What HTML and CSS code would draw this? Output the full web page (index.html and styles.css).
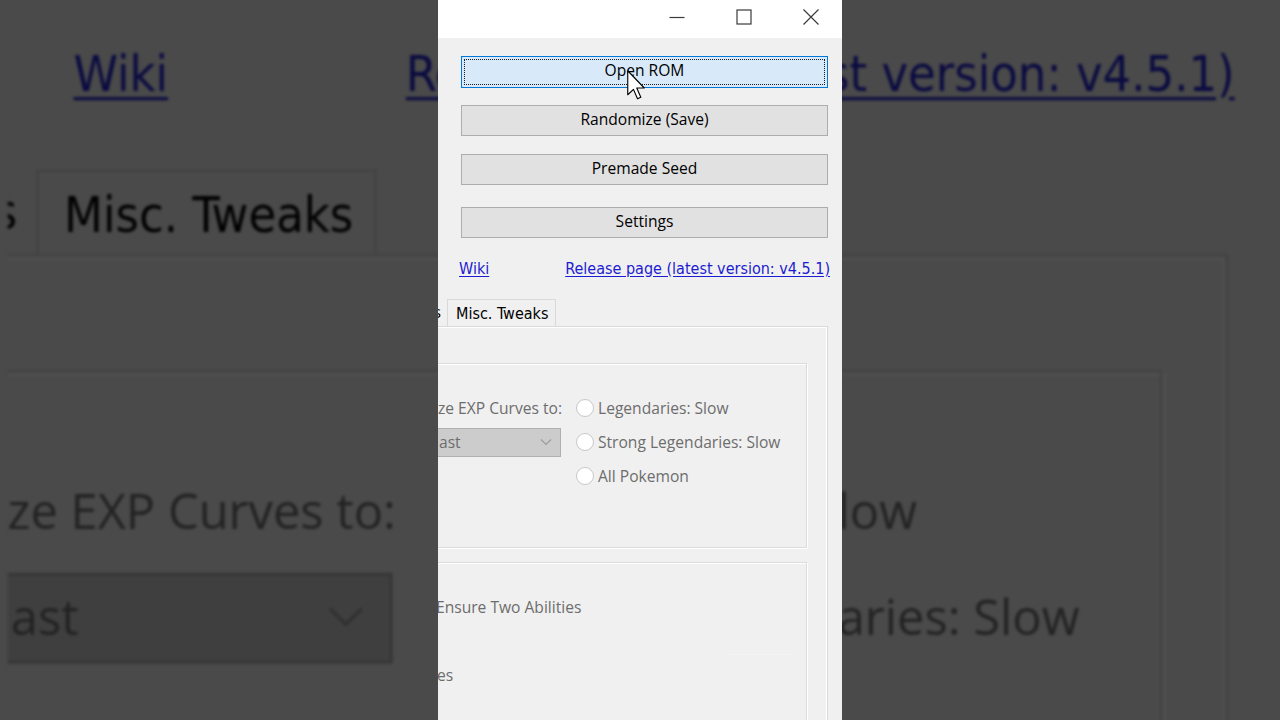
FILE: index.html
```html
<!DOCTYPE html>
<html>
<head>
<meta charset="utf-8">
<link rel="stylesheet" href="styles.css">
</head>
<body>
<div class="stage">
  <div class="backdrop">
    <div class="win">
      <div class="titlebar">
        <div class="ctl"><svg width="16" height="16" viewBox="0 0 16 16"><path d="M0.5 8.5H15.5" stroke="#3a3a3a" stroke-width="1.2" fill="none"/></svg></div>
        <div class="ctl"><svg width="16" height="16" viewBox="0 0 16 16"><rect x="1" y="1" width="14" height="14" stroke="#3a3a3a" stroke-width="1.2" fill="none"/></svg></div>
        <div class="ctl"><svg width="16" height="16" viewBox="0 0 16 16"><path d="M0.5 0.5L15.5 15.5M15.5 0.5L0.5 15.5" stroke="#3a3a3a" stroke-width="1.2" fill="none"/></svg></div>
      </div>
      <div class="main">
        <div class="btn btn-focus"><span class="focus-ring">Open ROM</span></div>
        <div class="btn btn-2">Randomize (Save)</div>
        <div class="btn btn-3">Premade Seed</div>
        <div class="btn btn-4">Settings</div>
        <div class="links">
          <a class="link">Wiki</a>
          <a class="link">Release page (latest version: v4.5.1)</a>
        </div>
      </div>
      <div class="tabs">
        <div class="tab tab-prev">s</div>
        <div class="tab">Misc. Tweaks</div>
      </div>
      <div class="panel">
        <div class="group group-1">
          <div class="cell-l">ze EXP Curves to:</div>
          <div class="cell-r"><span class="radio"></span>Legendaries: Slow</div>
          <div class="cell-l"><div class="combo"><span class="combo-text">ast</span><svg class="chev" width="12" height="8" viewBox="0 0 12 8"><path d="M1 1.5L6 6.5L11 1.5" stroke="#9a9a9a" stroke-width="1.1" fill="none"/></svg></div></div>
          <div class="cell-r"><span class="radio"></span>Strong Legendaries: Slow</div>
          <div class="cell-l"></div>
          <div class="cell-r"><span class="radio"></span>All Pokemon</div>
        </div>
        <div class="group group-2">
          <div class="row2 row2-a">Ensure Two Abilities</div>
          <div class="row2 row2-b">es</div>
          <div class="faint"></div>
        </div>
      </div>
    </div>
  </div>

  <div class="win front">
    <div class="titlebar">
      <div class="ctl"><svg width="16" height="16" viewBox="0 0 16 16"><path d="M0.5 8.5H15.5" stroke="#3a3a3a" stroke-width="1.2" fill="none"/></svg></div>
      <div class="ctl"><svg width="16" height="16" viewBox="0 0 16 16"><rect x="1" y="1" width="14" height="14" stroke="#3a3a3a" stroke-width="1.2" fill="none"/></svg></div>
      <div class="ctl"><svg width="16" height="16" viewBox="0 0 16 16"><path d="M0.5 0.5L15.5 15.5M15.5 0.5L0.5 15.5" stroke="#3a3a3a" stroke-width="1.2" fill="none"/></svg></div>
    </div>
    <div class="main">
      <div class="btn btn-focus"><span class="focus-ring">Open ROM</span></div>
      <div class="btn btn-2">Randomize (Save)</div>
      <div class="btn btn-3">Premade Seed</div>
      <div class="btn btn-4">Settings</div>
      <div class="links">
        <a class="link">Wiki</a>
        <a class="link">Release page (latest version: v4.5.1)</a>
      </div>
    </div>
    <div class="tabs">
      <div class="tab tab-prev">s</div>
      <div class="tab">Misc. Tweaks</div>
    </div>
    <div class="panel">
      <div class="group group-1">
        <div class="cell-l">ze EXP Curves to:</div>
        <div class="cell-r"><span class="radio"></span>Legendaries: Slow</div>
        <div class="cell-l"><div class="combo"><span class="combo-text">ast</span><svg class="chev" width="12" height="8" viewBox="0 0 12 8"><path d="M1 1.5L6 6.5L11 1.5" stroke="#9a9a9a" stroke-width="1.1" fill="none"/></svg></div></div>
        <div class="cell-r"><span class="radio"></span>Strong Legendaries: Slow</div>
        <div class="cell-l"></div>
        <div class="cell-r"><span class="radio"></span>All Pokemon</div>
      </div>
      <div class="group group-2">
        <div class="row2 row2-a">Ensure Two Abilities</div>
        <div class="row2 row2-b">es</div>
        <div class="faint"></div>
      </div>
    </div>
    <svg class="cursor" width="18" height="30" viewBox="0 0 12 20"><path d="M0.5 0.5L0.5 16.5L4.3 12.9L7 19.2L9.2 18.2L6.5 12L11.5 12Z" fill="#fff" stroke="#000" stroke-width="0.75" stroke-linejoin="round"/></svg>
  </div>
</div>
</body>
</html>
```

FILE: styles.css
```css
* { box-sizing: border-box; }
html, body { margin: 0; padding: 0; }
body {
  width: 1280px;
  height: 720px;
  overflow: hidden;
  background: #4a4a4a;
}
.stage {
  position: relative;
  width: 1280px;
  height: 720px;
  display: flex;
  justify-content: center;
  overflow: hidden;
}
.backdrop {
  position: absolute;
  left: 438px;
  top: 0;
  width: 404px;
  height: 720px;
  transform: scale(3.13);
  transform-origin: 202px 360px;
  filter: brightness(0.31) blur(0.45px);
}
.win {
  position: relative;
  width: 404px;
  height: 720px;
  background: #f0f0f0;
  overflow: hidden;
  font-family: "Open Sans", "Noto Sans", sans-serif;
  font-size: 15.6px;
  color: #000;
}
.titlebar {
  height: 38px;
  background: #fff;
  display: flex;
  justify-content: flex-end;
  margin-right: -2px;
}
.ctl {
  width: 67px;
  height: 33px;
  display: flex;
  align-items: center;
  justify-content: center;
}
.main {
  padding: 18px 14px 0 23px;
  display: flex;
  flex-direction: column;
}
.btn {
  height: 31px;
  background: #e1e1e1;
  border: 1px solid #adadad;
  display: flex;
  align-items: center;
  justify-content: center;
  line-height: 1;
  padding-bottom: 2px;
}
.btn-focus {
  height: 32px;
  background: #d8e9f9;
  border: 1px solid #0078d7;
  padding: 2px;
}
.focus-ring {
  width: 100%;
  height: 100%;
  border: 1px dotted #1a1a1a;
  display: flex;
  align-items: center;
  justify-content: center;
  padding-bottom: 2px;
}
.btn-2 { margin-top: 17px; }
.btn-3 { margin-top: 18px; }
.btn-4 { margin-top: 22px; }
.links {
  margin-top: 20px;
  margin-left: -2px;
  height: 20px;
  display: flex;
  justify-content: space-between;
  align-items: center;
  margin-right: -2px;
}
.link {
  font-family: "DejaVu Sans", sans-serif;
  font-stretch: condensed;
  font-size: 16px;
  color: #1c1cd0;
  text-decoration: underline;
  text-underline-offset: 2px;
}
.tabs {
  margin-top: 21px;
  height: 27px;
  display: flex;
  font-family: "DejaVu Sans", sans-serif;
  font-stretch: condensed;
  font-size: 16px;
}
.tab {
  height: 27px;
  border: 1px solid #d9d9d9;
  border-bottom: none;
  padding: 0 7px 0 8px;
  display: flex;
  align-items: center;
  white-space: nowrap;
}
.tab-prev {
  width: 10px;
  border-left: none;
  border-top: none;
  padding: 0 6px 0 0;
  justify-content: flex-end;
}
.tab-prev + .tab { margin-left: -1px; }
.panel {
  margin-left: -20px;
  width: 410px;
  height: 420px;
  border-top: 1px solid #d9d9d9;
  border-right: 1px solid #d9d9d9;
  box-shadow: inset 0 1px 0 #fff, inset -1px 0 0 #fff;
  padding: 36px 20px 0 0;
  color: #6d6d6d;
}
.group {
  margin-left: 10px;
  border: 1px solid #dcdcdc;
  box-shadow: inset 1px 1px 0 #fff, 1px 1px 0 #fff;
}
.group-1 {
  height: 185px;
  display: grid;
  grid-template-columns: 133px 1fr;
  grid-template-rows: 34px 34px 34px;
  column-gap: 13px;
  padding-top: 27px;
}
.cell-l {
  display: flex;
  justify-content: flex-end;
  align-items: center;
  white-space: nowrap;
}
.cell-r {
  display: flex;
  align-items: center;
  white-space: nowrap;
}
.radio {
  width: 18px;
  height: 18px;
  border-radius: 50%;
  background: #fff;
  border: 1px solid #c8c8c8;
  margin-left: 1px;
  margin-right: 4px;
  flex: none;
}
.combo {
  width: 141px;
  height: 29px;
  flex: none;
  margin-right: 1px;
  background: #cccccc;
  border: 1px solid #b0b0b0;
  display: flex;
  align-items: center;
  padding: 0 8px 1px 18px;
}
.combo-text { margin-right: auto; }
.chev { flex: none; }
.group-2 {
  margin-top: 14px;
  height: 200px;
  padding-top: 33px;
  position: relative;
}
.row2 {
  height: 22px;
  display: flex;
  align-items: center;
  white-space: nowrap;
}
.row2-a { margin-left: 7px; }
.row2-b { margin-top: 46px; margin-left: 8px; }
.faint {
  position: absolute;
  left: 297px;
  top: 91px;
  width: 68px;
  height: 1px;
  background: #f4f4f4;
}
.cursor {
  position: absolute;
  left: 189px;
  top: 70px;
}
```
